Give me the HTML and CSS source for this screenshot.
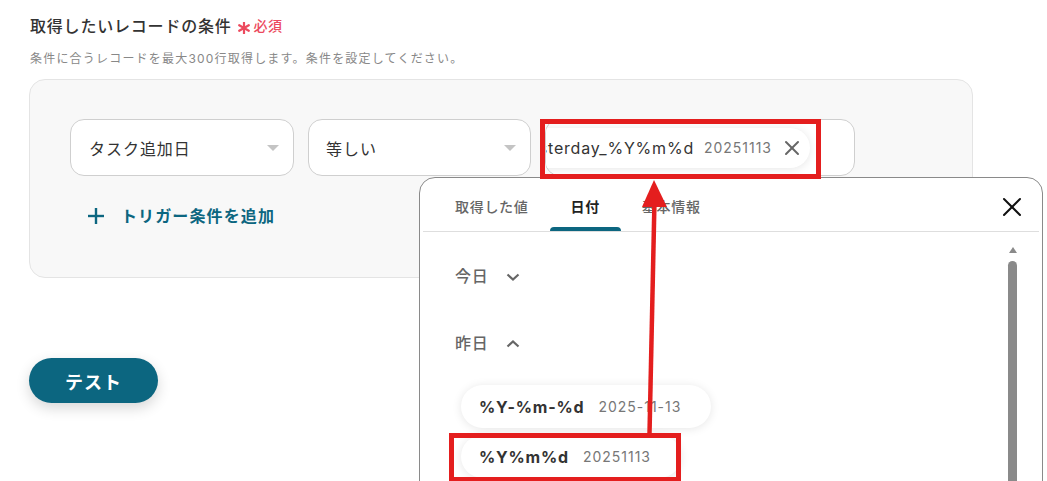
FILE: index.html
```html
<!DOCTYPE html>
<html lang="ja">
<head>
<meta charset="utf-8">
<link rel="stylesheet" href="styles.css">
</head>
<body>
<div class="page">
  <div class="field-title">取得したいレコードの条件
    <span class="req"><svg class="ast" viewBox="0 0 12 12" width="12" height="12"><g stroke="currentColor" stroke-width="2.2" stroke-linecap="round"><line x1="6" y1="0.5" x2="6" y2="11.5"/><line x1="1.2" y1="3.2" x2="10.8" y2="8.8"/><line x1="1.2" y1="8.8" x2="10.8" y2="3.2"/></g></svg>必須</span>
  </div>
  <p class="hint">条件に合うレコードを最大300行取得します。条件を設定してください。</p>

  <div class="panel">
    <div class="cond-row">
      <div class="select"><span>タスク追加日</span><span class="caret"></span></div>
      <div class="select"><span>等しい</span><span class="caret"></span></div>
      <div class="value-input">
        <div class="chip chip-in">
          <span class="k">yesterday_%Y%m%d</span>
          <span class="v">20251113</span>
          <svg class="chip-x" viewBox="0 0 16 16" width="16" height="16"><g stroke="#666" stroke-width="2" stroke-linecap="round"><line x1="2" y1="2" x2="14" y2="14"/><line x1="14" y1="2" x2="2" y2="14"/></g></svg>
        </div>
      </div>
    </div>
    <div class="add-row">
      <svg viewBox="0 0 16 16" width="16" height="16"><g stroke="currentColor" stroke-width="2.4"><line x1="8" y1="0" x2="8" y2="16"/><line x1="0" y1="8" x2="16" y2="8"/></g></svg>
      <span>トリガー条件を追加</span>
    </div>
  </div>

  <button class="test-btn">テスト</button>

  <div class="popup">
    <div class="tabs">
      <div class="tab">取得した値</div>
      <div class="tab active">日付</div>
      <div class="tab">基本情報</div>
      <svg class="close" viewBox="0 0 20 20" width="20" height="20"><g stroke="#111" stroke-width="2" stroke-linecap="round"><line x1="2" y1="2" x2="18" y2="18"/><line x1="18" y1="2" x2="2" y2="18"/></g></svg>
    </div>
    <div class="popup-body">
      <div class="list">
        <div class="group">今日 <svg class="chev" viewBox="0 0 14 8" width="14" height="8"><polyline points="1.5,1.5 7,6.5 12.5,1.5" fill="none" stroke="#666" stroke-width="2.2"/></svg></div>
        <div class="group g2">昨日 <svg class="chev" viewBox="0 0 14 8" width="14" height="8"><polyline points="1.5,6.5 7,1.5 12.5,6.5" fill="none" stroke="#666" stroke-width="2.2"/></svg></div>
        <div class="chip opt"><span class="k">%Y-%m-%d</span><span class="v">2025-11-13</span></div>
        <div class="chip opt"><span class="k">%Y%m%d</span><span class="v">20251113</span></div>
      </div>
      <div class="scrollbar">
        <span class="sb-arrow"></span>
        <span class="sb-thumb"></span>
      </div>
    </div>
  </div>

  <div class="mark mark1"></div>
  <div class="mark mark2"></div>
  <svg class="arrow" width="1047" height="481" viewBox="0 0 1047 481">
    <line x1="649.5" y1="434" x2="654.5" y2="200" stroke="#e41e1e" stroke-width="4.5"/>
    <polygon points="654,180 642,207 667,207" fill="#e41e1e"/>
  </svg>
</div>
</body>
</html>
```

FILE: styles.css
```css
* { box-sizing: border-box; }
html, body { margin: 0; padding: 0; background: #fff; }
body {
  font-family: "Inter", "Noto Sans CJK JP", sans-serif;
  color: #333;
  width: 1047px;
  height: 481px;
  overflow: hidden;
}
.page {
  position: relative;
  padding: 14px 0 0 29px;
  height: 481px;
}
.field-title {
  padding-left: 1px;
  font-size: 16px;
  line-height: 24px;
  font-weight: 500;
  letter-spacing: 0.05em;
  color: #333;
  display: flex;
  align-items: center;
}
.req {
  display: inline-flex;
  align-items: center;
  color: #ec4a5e;
  font-size: 14px;
  margin-left: 6px;
  letter-spacing: 0.02em;
}
.ast { margin: 4px 4px 0 0; }
.hint {
  margin: 12px 0 0 1px;
  font-size: 12px;
  line-height: 18px;
  letter-spacing: 0.1em;
  color: #888;
}
.panel {
  margin-top: 11px;
  width: 944px;
  height: 199px;
  background: #f8f8f8;
  border: 1px solid #e4e4e4;
  border-radius: 16px;
  padding: 39px 40px 0 40px;
}
.cond-row {
  display: flex;
  gap: 14px;
}
.select {
  width: 224px;
  height: 57px;
  background: #fff;
  border: 1px solid #cfcfcf;
  border-radius: 14px;
  display: flex;
  align-items: center;
  justify-content: space-between;
  padding: 0 14px 0 18px;
  font-size: 16px;
  letter-spacing: 0.06em;
  color: #333;
}
.select:nth-child(2) { width: 223px; padding-left: 17px; }
.caret {
  width: 0; height: 0;
  border-left: 6px solid transparent;
  border-right: 6px solid transparent;
  border-top: 6px solid #c4c4c4;
}
.value-input {
  width: 310px;
  height: 57px;
  background: #fff;
  border: 1px solid #cfcfcf;
  border-radius: 14px;
  display: flex;
  align-items: center;
  justify-content: flex-end;
  overflow: hidden;
  padding-right: 44px;
}
.chip {
  display: flex;
  align-items: center;
  background: #fff;
  border-radius: 22px;
  box-shadow: 0 1px 10px rgba(0,0,0,0.10);
  white-space: nowrap;
  flex-shrink: 0;
}
.chip-in {
  height: 40px;
  padding: 0 10px 0 18px;
}
.chip-in .k {
  font-size: 16px;
  letter-spacing: 0.05em;
  color: #333;
}
.chip-in .v {
  font-size: 14px;
  color: #777;
  margin-left: 10px;
  letter-spacing: 0.07em;
}
.chip-x { margin-left: 12px; }
.add-row {
  margin-top: 28px;
  display: flex;
  align-items: center;
  gap: 17px;
  padding-left: 18px;
  color: #0c6680;
  font-size: 16px;
  font-weight: 700;
  line-height: 24px;
  letter-spacing: 0.07em;
}
.test-btn {
  display: block;
  margin-top: 80px;
  width: 129px;
  height: 45px;
  border: none;
  border-radius: 23px;
  background: #0c6680;
  color: #fff;
  font-family: inherit;
  font-size: 18px;
  font-weight: 700;
  letter-spacing: 0.06em;
  box-shadow: 0 5px 14px rgba(0,0,0,0.16);
}
.popup {
  position: absolute;
  left: 419px;
  top: 177px;
  width: 624px;
  height: 330px;
  background: #fff;
  border: 1px solid #8a8a8a;
  border-radius: 16px;
  padding: 0 3px;
}
.tabs {
  display: flex;
  align-items: stretch;
  height: 54px;
  border-bottom: 1px solid #dedede;
  padding-left: 11px;
  position: relative;
}
.tab {
  padding: 18px 21px 0;
  font-size: 14px;
  line-height: 22px;
  letter-spacing: 0.05em;
  color: #666;
  font-weight: 500;
  position: relative;
}
.tab.active { color: #222; font-weight: 700; }
.tab.active::after {
  content: "";
  position: absolute;
  left: 0; right: 0; bottom: 0;
  height: 4px;
  background: #0c6680;
  border-radius: 4px 4px 0 0;
}
.close {
  position: absolute;
  right: 17px;
  top: 19px;
}
.popup-body {
  display: flex;
  justify-content: space-between;
}
.list {
  padding: 32px 0 0 32px;
  display: flex;
  flex-direction: column;
  align-items: flex-start;
}
.group {
  display: flex;
  align-items: center;
  gap: 12px;
  font-size: 16px;
  line-height: 24px;
  letter-spacing: 0.04em;
  color: #666;
  font-weight: 500;
  height: 24px;
}
.chev { margin-left: 6px; margin-top: 1px; }
.g2 { margin-top: 43px; }
.opt {
  height: 43px;
  padding: 0 30px 0 18px;
  margin-left: 6px;
  margin-top: 30px;
}
.opt + .opt { margin-top: 7px; }
.opt .k {
  font-size: 16px;
  font-weight: 700;
  color: #333;
  letter-spacing: 0.05em;
}
.opt .v {
  font-size: 14px;
  color: #777;
  margin-left: 14px;
  letter-spacing: 0.07em;
}
.scrollbar {
  width: 9px;
  margin: 15px 22px 0 0;
  display: flex;
  flex-direction: column;
  align-items: center;
}
.sb-arrow {
  width: 0; height: 0;
  border-left: 4px solid transparent;
  border-right: 4px solid transparent;
  border-bottom: 6px solid #8a8a8a;
}
.sb-thumb {
  margin-top: 8px;
  width: 9px;
  height: 240px;
  background: #8a8a8a;
  border-radius: 5px 5px 0 0;
}
.mark {
  position: absolute;
  border: 5px solid #e41e1e;
}
.mark1 { left: 540px; top: 119px; width: 281px; height: 60px; }
.mark2 { left: 449px; top: 433px; width: 232px; height: 49px; }
.arrow {
  position: absolute;
  left: 0; top: 0;
  pointer-events: none;
}
```
